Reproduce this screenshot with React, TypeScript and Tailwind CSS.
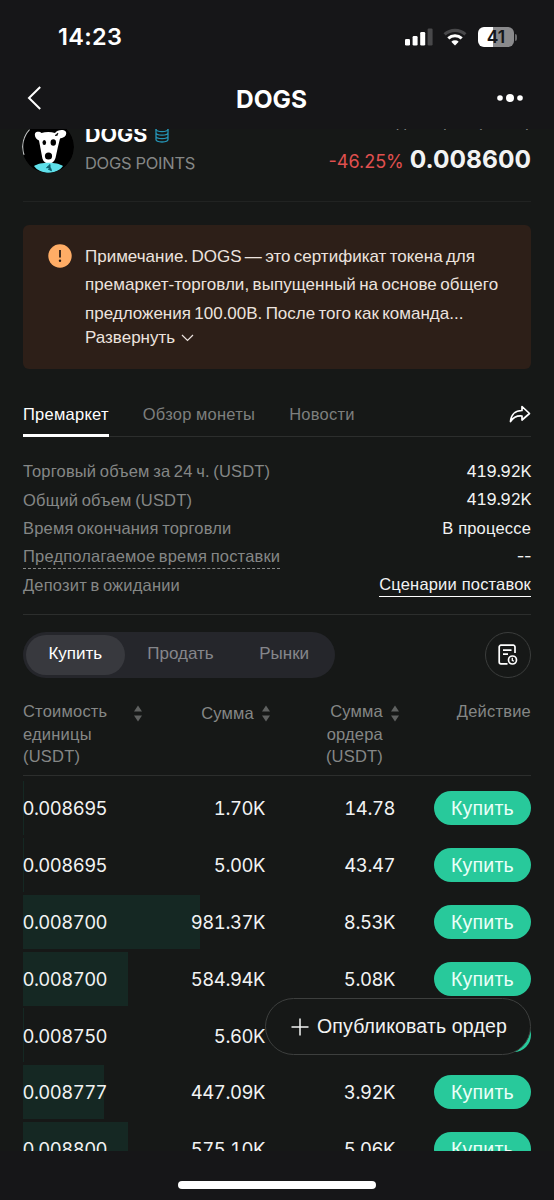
import React, { ReactNode } from 'react';
import clsx from 'clsx';

interface Order {
  price: string;
  amount: string;
  total: string;
  depth: number;
}

// depth is the width of the green bar behind the row, in px
const orders: Order[] = [
  { price: '0.008695', amount: '1.70K', total: '14.78', depth: 1 },
  { price: '0.008695', amount: '5.00K', total: '43.47', depth: 1 },
  { price: '0.008700', amount: '981.37K', total: '8.53K', depth: 177 },
  { price: '0.008700', amount: '584.94K', total: '5.08K', depth: 105 },
  { price: '0.008750', amount: '5.60K', total: '', depth: 1 },
  { price: '0.008777', amount: '447.09K', total: '3.92K', depth: 81 },
  { price: '0.008800', amount: '575.10K', total: '5.06K', depth: 105 },
];

function StatusBar() {
  return (
    <div className="flex h-[74px] items-center justify-between pl-[58px] pr-[37px]">
      <span className="text-[23.5px] leading-none font-semibold tracking-[0.3px] text-white">14:23</span>
      <div className="flex items-center">
        <svg width="28" height="18" viewBox="0 0 28 18" fill="#fff">
          <rect x="0" y="11" width="5" height="6.5" rx="1.3" />
          <rect x="7.6" y="8" width="5" height="9.5" rx="1.3" />
          <rect x="15.2" y="4" width="5" height="13.5" rx="1.3" />
          <rect x="22.6" y="0.5" width="5" height="17" rx="1.3" fill="#48484a" />
        </svg>
        <svg className="ml-[10px]" width="24" height="18" viewBox="0 0 24 18" fill="none">
          <path d="M1.6 6.4a15.2 15.2 0 0 1 20.8 0" stroke="#48484a" strokeWidth="3.2" />
          <path d="M5.3 10.4a9.8 9.8 0 0 1 13.4 0" stroke="#fff" strokeWidth="3" />
          <path d="M12 17.6l-3.7-3.9a5.5 5.5 0 0 1 7.4 0z" fill="#fff" />
        </svg>
        <div className="ml-[11px] flex h-[20px] w-[36px] items-center justify-center rounded-[6px] bg-linear-to-r from-white from-41% to-[#8a8a8c] to-41%">
          <span className="text-[17.5px] leading-none font-semibold text-[#161618]">41</span>
        </div>
        <div className="ml-[1px] h-[7px] w-[2px] rounded-r-full bg-[#6a6a6c]" />
      </div>
    </div>
  );
}

function NavBar() {
  return (
    <div className="flex h-[55px] items-start justify-between pt-[11px] pr-[30px] pl-[26px]">
      <svg width="17" height="26" viewBox="0 0 17 26" fill="none" stroke="#fff" strokeWidth="2">
        <path d="M14.2 2L3 13l11.2 11" />
      </svg>
      <h1 className="pl-[4px] text-[24.5px] leading-[28px] font-bold text-white">DOGS</h1>
      <svg className="mt-[8px]" width="28" height="10" viewBox="0 0 28 10" fill="#fff">
        <circle cx="4" cy="5" r="2.8" />
        <circle cx="14" cy="5" r="4" />
        <circle cx="24" cy="5" r="2.8" />
      </svg>
    </div>
  );
}

function DogAvatar() {
  return (
    <svg width="52" height="52" viewBox="0 0 52 52" className="-ml-[1px] shrink-0 rounded-full">
      <circle cx="26" cy="26" r="26" fill="#000" />
      <path d="M7.5 8.5A25.3 25.3 0 0 0 2 34" fill="none" stroke="#b9bcbc" strokeWidth="1.2" />
      <path
        d="M19.500 12c4-1.200 9.500-1.200 13.500 0 2-3 9-4.500 11-1 1 3.500-1.500 5.500-6 6.500l-2.200 9-2.300 10.500c-1.200 3.700-3.600 5.500-6.700 5.500s-5.400-1.800-6.400-5l-3.400-18c-3-1-5-4.500-3.800-7.500 1.300-2 5-1.500 6.300 0z"
        fill="#fff"
      />
      <ellipse cx="22.3" cy="21.5" rx="1.8" ry="2.6" fill="#000" />
      <ellipse cx="31.3" cy="21.5" rx="2.7" ry="3.2" fill="#000" />
      <ellipse cx="26.5" cy="35" rx="3.6" ry="3.6" fill="#000" />
      <path d="M33 14.500l3-2.500-.8 2.500z" fill="#000" stroke="#000" strokeWidth=".6" />
      <path d="M12 45c6-4.500 23-4.500 29 0-6 9-23 9-29 0z" fill="#5fe0ea" />
      <path d="M28 43.500l-3.500 3.200 3.500-.2zM28.500 46.700l1 3-3.200-1.500z" fill="#0b5d6b" stroke="#0b5d6b" />
    </svg>
  );
}

function TokenInfo() {
  return (
    <div className="-mt-[8px] flex h-[81px] border-b border-[#212322]">
      <DogAvatar />
      <div className="ml-[11px]">
        <div className="flex items-center">
          <span className="text-[21.5px] leading-[26px] font-bold text-white">DOGS</span>
          <svg className="ml-[8px]" width="14" height="17" viewBox="0 0 14 17" fill="none" stroke="#2593b4" strokeWidth="1.3">
            <ellipse cx="7" cy="3.2" rx="6" ry="2.4" />
            <path d="M1 3.200v10.400c0 3.200 12 3.200 12 0V3.200M1 6.700c0 3.200 12 3.200 12 0M1 10.200c0 3.200 12 3.200 12 0" />
          </svg>
        </div>
        <div className="mt-[6px] text-[16.5px] leading-[20px] tracking-[-0.3px] text-[#858786]">DOGS POINTS</div>
      </div>
      <div className="ml-auto flex flex-col items-end">
        <span className="-mt-[9px] font-['Liberation_Sans',Arial,sans-serif] text-[16px] leading-[20px] text-[#858786]">
          Последняя цена (USDT)
        </span>
        <div className="mt-[13px] flex items-baseline gap-[6px]">
          <span className="text-[18px] leading-[28px] text-[#e0504f]">-46.25%</span>
          <span className="text-[24.5px] leading-[28px] font-bold text-[#f2f3f3]">0.008600</span>
        </div>
      </div>
    </div>
  );
}

function Notice() {
  return (
    <div className="mt-[23px] flex h-[144px] rounded-[6px] bg-[#2d1f18] pt-[18px] pl-[25px] font-['Liberation_Sans',Arial,sans-serif] text-[17px] text-[#ece3df]">
      <svg className="mt-[1px] shrink-0" width="24" height="24" viewBox="0 0 24 24">
        <circle cx="12" cy="12" r="11.7" fill="#ffad66" />
        <path d="M12 6v7.500" stroke="#2d1f18" strokeWidth="1.8" />
        <circle cx="12" cy="16.8" r="1.2" fill="#2d1f18" />
      </svg>
      <div className="ml-[13px]">
        <div className="leading-[28.4px] whitespace-nowrap [word-spacing:-1.4px]">
          <p>Примечание. DOGS — это сертификат токена для</p>
          <p className="tracking-[0.05px]">премаркет-торговли, выпущенный на основе общего</p>
          <p>предложения 100.00B. После того как команда...</p>
        </div>
        <button className="-mt-[2px] flex items-center gap-[6px] leading-[24px]">
          Развернуть
          <svg width="13" height="8" viewBox="0 0 13 8" fill="none" stroke="currentColor" strokeWidth="1.2">
            <path d="M1 1l5.500 5.500L12 1" />
          </svg>
        </button>
      </div>
    </div>
  );
}

function Tabs() {
  return (
    <div className="mt-[31px] flex h-[37px] border-b border-[#2c2e2d] font-['Liberation_Sans',Arial,sans-serif] text-[16.5px] leading-[28px] tracking-[0.25px] text-[#7d7f7e]">
      <button className="h-[37px] border-b-[3px] border-white pb-[6px] text-white">Премаркет</button>
      <button className="ml-[34px] h-[28px] [word-spacing:-0.5px]">Обзор монеты</button>
      <button className="ml-[34px] h-[28px]">Новости</button>
      <svg className="mt-[5px] ml-auto" width="22" height="18" viewBox="0 0 22 18" fill="none" stroke="#fff" strokeWidth="1.7" strokeLinejoin="round">
        <path d="M13 1.500l7.500 7-7.500 6.500v-4C8 10.500 4.500 12 1.500 16.500 2 10 6 5.500 13 5.500z" />
      </svg>
    </div>
  );
}

function StatRow({ label, children, dotted }: { label: string; children: ReactNode; dotted?: boolean }) {
  return (
    <div className="flex h-[28.4px] items-center justify-between">
      <span className={clsx('leading-[24px] [word-spacing:-1.2px]', dotted && 'border-b border-dashed border-[#858786]')}>
        {label}
      </span>
      <span className="text-[#f2f3f3]">{children}</span>
    </div>
  );
}

function Stats() {
  return (
    <div className="mt-[20px] h-[158px] border-b border-[#2c2e2d] font-['Liberation_Sans',Arial,sans-serif] text-[16.5px] tracking-[0.18px] text-[#858786]">
      <StatRow label="Торговый объем за 24 ч. (USDT)">
        <span className="font-[Inter,sans-serif] tracking-[-0.6px] tabular-nums">419.92K</span>
      </StatRow>
      <StatRow label="Общий объем (USDT)">
        <span className="font-[Inter,sans-serif] tracking-[-0.6px] tabular-nums">419.92K</span>
      </StatRow>
      <StatRow label="Время окончания торговли">В процессе</StatRow>
      <StatRow label="Предполагаемое время поставки" dotted>
        <span className="font-[Inter,sans-serif] tracking-[-0.5px]">--</span>
      </StatRow>
      <StatRow label="Депозит в ожидании">
        <a className="block border-b border-white leading-[23px]">Сценарии поставок</a>
      </StatRow>
    </div>
  );
}

function SideSwitch() {
  return (
    <div className="mt-[17px] flex items-center justify-between font-['Liberation_Sans',Arial,sans-serif] text-[17px]">
      <div className="flex h-[46px] w-[312px] items-center rounded-full bg-[#25262b] p-[3px] text-[#85868b]">
        <button className="h-[40px] w-[99px] rounded-full bg-[#38393e] pb-[2px] text-white">Купить</button>
        <button className="w-[112px] pb-[2px]">Продать</button>
        <button className="w-[96px] pb-[2px]">Рынки</button>
      </div>
      <button className="flex size-[46px] items-center justify-center rounded-full border-[1.5px] border-[#3b3d3c]">
        <svg width="20" height="22" viewBox="0 0 20 22" fill="none" stroke="#fff" strokeWidth="1.7">
          <path d="M17 9V3a1.800 1.800 0 0 0-1.800-1.800H3A1.800 1.800 0 0 0 1.200 3v15A1.800 1.800 0 0 0 3 19.800h6.500M5 6.200h8.500M5 10.200h5" />
          <circle cx="14.5" cy="16" r="4" />
          <path d="M14.300 13.800v2.500l1.500 1" strokeWidth="1.3" />
        </svg>
      </button>
    </div>
  );
}

function SortIcon() {
  return (
    <svg className="shrink-0" width="8" height="17" viewBox="0 0 8 17" fill="#5f6160">
      <path d="M4 .500L8 6.500H0zM4 16.500L8 10.500H0z" />
    </svg>
  );
}

function OrderTable() {
  return (
    <div>
      <div className="mt-[22px] flex h-[76px] border-b border-[#2c2e2d] font-['Liberation_Sans',Arial,sans-serif] text-[16.5px] leading-[22.7px] tracking-[0.2px] text-[#858786]">
        <div className="flex w-[119px] justify-between">
          <span className="w-[90px]">Стоимость единицы (USDT)</span>
          <span className="mt-[5px]">
            <SortIcon />
          </span>
        </div>
        <div className="flex w-[128px] justify-end gap-[8px] pt-[2px]">
          <span>Сумма</span>
          <span className="mt-[3px]">
            <SortIcon />
          </span>
        </div>
        <div className="flex w-[129px] justify-end gap-[8px]">
          <span className="w-[60px] text-right">Сумма ордера (USDT)</span>
          <span className="mt-[5px]">
            <SortIcon />
          </span>
        </div>
        <span className="ml-auto">Действие</span>
      </div>
      <div className="mt-[5px]">
        {orders.map((order, i) => (
          <div
            key={i}
            className="grid h-[56.85px] grid-cols-[119px_123px_130px_136px] text-[18.5px] tracking-[-0.45px] text-[#f2f3f3] tabular-nums"
          >
            <div className="col-start-1 row-start-1 h-[54px] bg-[#152823]" style={{ width: order.depth }} />
            <span className="col-start-1 row-start-1 -ml-[0.5px] flex h-[56px] items-center tracking-[-0.55px]">{order.price}</span>
            <span className="col-start-2 row-start-1 flex h-[56px] items-center justify-end">{order.amount}</span>
            <span className="col-start-3 row-start-1 flex h-[56px] items-center justify-end">{order.total}</span>
            <div className="col-start-4 row-start-1 flex h-[54px] items-center justify-end">
              <button className="h-[34px] w-[97px] rounded-full bg-[#28c99b] font-['Liberation_Sans',Arial,sans-serif] text-[19.5px] leading-[34px] tracking-[0.2px] text-[#eafff8]">
                {order.total && 'Купить'}
              </button>
            </div>
          </div>
        ))}
      </div>
    </div>
  );
}

export default function App() {
  return (
    <div className="relative flex h-[1200px] w-[554px] flex-col overflow-hidden bg-[#161618] font-[Inter,sans-serif]">
      <header>
        <StatusBar />
        <NavBar />
      </header>
      <main className="h-[1022px] overflow-hidden bg-[#161817] px-[23px]">
        <TokenInfo />
        <Notice />
        <Tabs />
        <Stats />
        <SideSwitch />
        <OrderTable />
      </main>
      <footer className="flex flex-1 items-start justify-center pt-[30px]">
        <div className="h-[8px] w-[198px] rounded-full bg-white" />
      </footer>
      <button className="absolute top-[998px] left-[265px] flex h-[57px] w-[266px] items-center rounded-full border-[1.5px] border-[#3d3f3e] bg-[#161817] pl-[25px] font-['Liberation_Sans',Arial,sans-serif] text-[19.5px] tracking-[0.15px] whitespace-nowrap text-[#f2f3f3]">
        <svg className="mr-[8px] shrink-0" width="18" height="18" viewBox="0 0 18 18" stroke="currentColor" strokeWidth="1.5">
          <path d="M9 .500v17M.500 9h17" />
        </svg>
        Опубликовать ордер
      </button>
    </div>
  );
}
